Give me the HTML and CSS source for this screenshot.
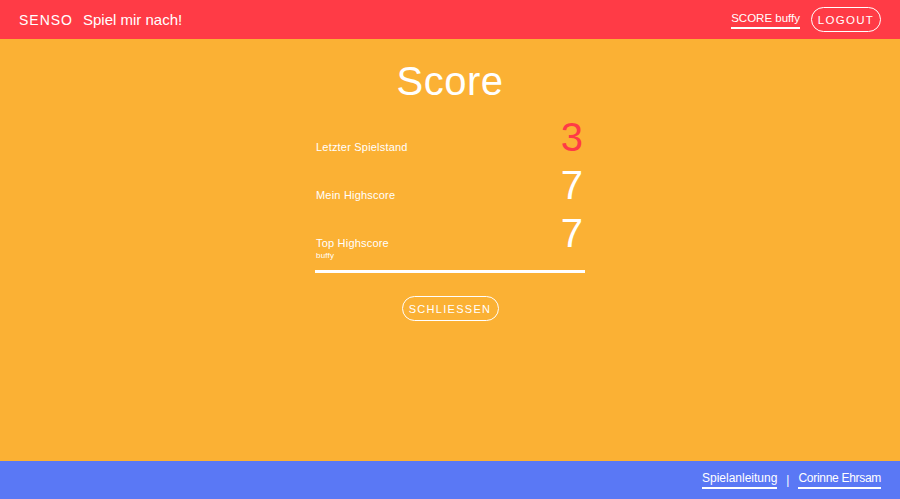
FILE: index.html
```html
<!DOCTYPE html>
<html lang="de">
<head>
<meta charset="utf-8">
<title>SENSO – Score</title>
<link rel="stylesheet" href="styles.css">
</head>
<body>
<div class="page">
  <header class="topbar">
    <div class="brand">
      <span class="logo">SENSO</span>
      <span class="tagline">Spiel mir nach!</span>
    </div>
    <nav class="nav">
      <a class="link" href="#">SCORE buffy</a>
      <button class="pill pill-small">LOGOUT</button>
    </nav>
  </header>

  <main class="main">
    <h1 class="title">Score</h1>
    <div class="scores">
      <div class="row">
        <div class="label">Letzter Spielstand</div>
        <div class="num num-red">3</div>
      </div>
      <div class="row">
        <div class="label">Mein Highscore</div>
        <div class="num">7</div>
      </div>
      <div class="row row-last">
        <div class="label">Top Highscore<span class="sub">buffy</span></div>
        <div class="num">7</div>
      </div>
    </div>
    <button class="pill pill-close">SCHLIESSEN</button>
  </main>

  <footer class="footer">
    <a class="link" href="#">Spielanleitung</a>
    <span class="sep">|</span>
    <a class="link link-name" href="#">Corinne Ehrsam</a>
  </footer>
</div>
</body>
</html>
```
FILE: styles.css
```css
html, body {
  margin: 0;
  padding: 0;
}
body {
  font-family: "Liberation Sans", Arial, sans-serif;
  color: #fff;
  background: #fbb134;
}
.page {
  height: 499px;
  display: flex;
  flex-direction: column;
}
.topbar {
  height: 39px;
  background: #ff3b46;
  display: flex;
  align-items: center;
  justify-content: space-between;
  padding: 0 19px;
  box-sizing: border-box;
}
.brand {
  display: flex;
  align-items: center;
  gap: 10px;
  font-size: 15px;
}
.logo {
  letter-spacing: 1px;
  font-size: 14px;
}
.nav {
  display: flex;
  align-items: center;
  gap: 11px;
}
.link {
  color: #fff;
  text-decoration: none;
  font-size: 12px;
  border-bottom: 2px solid #fff;
  padding-bottom: 2px;
  line-height: 14px;
}
.nav .link {
  font-size: 11.5px;
}
.pill {
  font-family: inherit;
  color: #fff;
  background: transparent;
  border: 1.5px solid #fff;
  border-radius: 13px;
  letter-spacing: 1.3px;
  cursor: pointer;
  padding: 0;
}
.pill-small {
  width: 70px;
  height: 25px;
  font-size: 11.5px;
}
.main {
  flex: 1;
  display: flex;
  flex-direction: column;
  align-items: center;
}
.title {
  margin: 22px 0 0;
  font-size: 40px;
  line-height: 40px;
  font-weight: 400;
  letter-spacing: 0.5px;
}
.scores {
  width: 270px;
  margin-top: 16px;
  border-bottom: 3px solid #fff;
  padding-bottom: 17px;
}
.row {
  height: 48px;
  display: flex;
  justify-content: space-between;
  align-items: baseline;
  padding: 0 2px 0 1px;
}
.row-last {
  height: 40px;
}
.label {
  font-size: 11px;
  letter-spacing: 0.2px;
}
.sub {
  display: block;
  font-size: 8px;
  margin-top: 2px;
}
.num {
  font-size: 40px;
  line-height: 40px;
}
.num-red {
  color: #ff3b46;
}
.pill-close {
  margin-top: 23px;
  width: 97px;
  height: 25px;
  font-size: 11px;
}
.footer {
  height: 38px;
  background: #5a78f5;
  display: flex;
  align-items: center;
  justify-content: flex-end;
  padding: 0 19px;
  gap: 9px;
  box-sizing: border-box;
}
.link-name {
  letter-spacing: -0.3px;
}
.sep {
  font-size: 12px;
}
```
